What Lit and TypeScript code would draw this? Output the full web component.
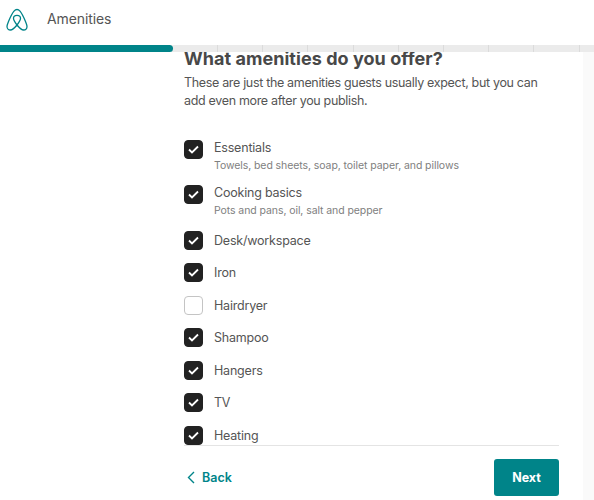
import { LitElement, html, css, svg } from 'lit';
import { customElement, state } from 'lit/decorators.js';

interface Amenity {
  name: string;
  hint?: string;
  checked: boolean;
}

const belo = svg`<path d="M11 16.5C9 14 7.5 11.5 7.5 9.8C7.5 8 9 6.8 11 6.8C13 6.8 14.5 8 14.5 9.8C14.5 11.5 13 14 11 16.5C8.5 19.5 6.5 21.5 4.5 21.5C2.5 21.5 1 20 1 18C1 16.5 1.5 15.5 2.5 13C4 9.5 6.5 4.5 8 2.7C9 1.5 10 1 11 1C12 1 13 1.5 14 2.7C15.5 4.5 18 9.5 19.5 13C20.5 15.5 21 16.5 21 18C21 20 19.5 21.5 17.5 21.5C15.5 21.5 13.5 19.5 11 16.5Z" fill="none" stroke="#008489" stroke-width="1.3" stroke-linejoin="round"/>`;

@customElement('app-root')
export class AppRoot extends LitElement {
  @state() private amenities: Amenity[] = [
    { name: 'Essentials', hint: 'Towels, bed sheets, soap, toilet paper, and pillows', checked: true },
    { name: 'Cooking basics', hint: 'Pots and pans, oil, salt and pepper', checked: true },
    { name: 'Desk/workspace', checked: true },
    { name: 'Iron', checked: true },
    { name: 'Hairdryer', checked: false },
    { name: 'Shampoo', checked: true },
    { name: 'Hangers', checked: true },
    { name: 'TV', checked: true },
    { name: 'Heating', checked: true },
  ];

  static styles = css`
    :host {
      display: flex;
      flex-direction: column;
      width: 594px;
      height: 500px;
      overflow: hidden;
      background: #fff;
      font-family: Inter, 'Liberation Sans', sans-serif;
      color: #555;
    }

    .topbar {
      display: flex;
      align-items: center;
      gap: 19px;
      height: 45px;
      flex: none;
      padding: 0 0 0 6px;
      box-sizing: border-box;
    }

    .topbar svg {
      width: 22px;
      height: 24px;
      margin-bottom: 5px;
    }

    .topbar span {
      font-size: 14px;
      letter-spacing: -0.1px;
      margin-bottom: 8px;
    }

    .track {
      position: relative;
      flex: none;
      height: 7px;
      display: flex;
      padding-left: 217px;
      background: #ebebeb;
    }

    .tick {
      width: 45.2px;
      flex: none;
      box-sizing: border-box;
      border-left: 1px solid #dbdbdb;
    }

    .fill {
      position: absolute;
      left: 0;
      top: 0;
      height: 7px;
      width: 173px;
      background: #008489;
      border-radius: 0 4px 4px 0;
    }

    .body {
      flex: 1;
      min-height: 0;
      display: flex;
    }

    .main {
      width: 375px;
      margin-left: 184px;
      display: flex;
      flex-direction: column;
    }

    .strip {
      flex: none;
      width: 11px;
      margin-left: 24px;
      background: #fafafa;
    }

    .scroll {
      height: 394px;
      flex: none;
      border-bottom: 1px solid #e4e4e4;
      box-sizing: border-box;
    }

    h1 {
      margin: 0;
      font-size: 18px;
      line-height: 13px;
      letter-spacing: 0.05px;
      font-weight: 700;
      color: #484848;
    }

    .intro {
      margin: 9px 0 0;
      font-size: 12.5px;
      line-height: 17.5px;
      letter-spacing: -0.33px;
    }

    ul {
      list-style: none;
      margin: 30.75px 0 0;
      padding: 0;
      display: flex;
      flex-direction: column;
    }

    li {
      display: flex;
      gap: 11px;
      margin-bottom: 13.5px;
    }

    li.has-hint {
      margin-bottom: 11.5px;
    }

    li:last-child {
      margin-bottom: 0;
    }

    .box {
      flex: none;
      width: 19px;
      height: 19px;
      border-radius: 4px;
      box-sizing: border-box;
      border: 1px solid #222;
      background: #222;
      display: flex;
      align-items: center;
      justify-content: center;
    }

    .box.off {
      background: #fff;
      border-color: #c4c4c4;
    }

    .box svg {
      width: 11px;
      height: 9px;
    }

    .name {
      font-size: 12.5px;
      line-height: 19px;
      letter-spacing: -0.2px;
    }

    .has-hint .name {
      line-height: 15px;
    }

    .hint {
      font-size: 10.5px;
      line-height: 16px;
      letter-spacing: -0.08px;
      margin-top: 3px;
      color: #808080;
    }

    .foot {
      flex: 1;
      display: flex;
      align-items: center;
      justify-content: space-between;
      padding-top: 9px;
    }

    .back {
      display: flex;
      align-items: center;
      gap: 7px;
      padding-left: 3px;
      font-size: 12.5px;
      font-weight: 600;
      color: #008489;
    }

    .back svg {
      width: 8px;
      height: 13px;
    }

    .next {
      width: 65px;
      height: 37px;
      border: 0;
      border-radius: 3px;
      background: #008489;
      color: #fff;
      font: 700 12.5px Inter, 'Liberation Sans', sans-serif;
    }
  `;

  render() {
    return html`
      <header class="topbar">
        <svg viewBox="0 0 22 23">${belo}</svg>
        <span>Amenities</span>
      </header>
      <div class="track">
        ${Array.from({ length: 9 }, () => html`<div class="tick"></div>`)}
        <div class="fill"></div>
      </div>
      <div class="body">
        <div class="main">
          <div class="scroll">
            <h1>What amenities do you offer?</h1>
            <p class="intro">These are just the amenities guests usually expect, but you can add even more after you publish.</p>
            <ul>
              ${this.amenities.map((a) => html`
                <li class=${a.hint ? 'has-hint' : ''}>
                  <div class="box ${a.checked ? '' : 'off'}">
                    ${a.checked ? html`<svg viewBox="0 0 11 9"><path d="M1 4.5L4 7.5L10 1.5" fill="none" stroke="#fff" stroke-width="1.8"/></svg>` : ''}
                  </div>
                  <div>
                    <div class="name">${a.name}</div>
                    ${a.hint ? html`<div class="hint">${a.hint}</div>` : ''}
                  </div>
                </li>
              `)}
            </ul>
          </div>
          <div class="foot">
            <div class="back">
              <svg viewBox="0 0 8 13"><path d="M7 1L1.5 6.5L7 12" fill="none" stroke="#008489" stroke-width="1.4"/></svg>
              Back
            </div>
            <button class="next">Next</button>
          </div>
        </div>
        <div class="strip"></div>
      </div>
    `;
  }
}
